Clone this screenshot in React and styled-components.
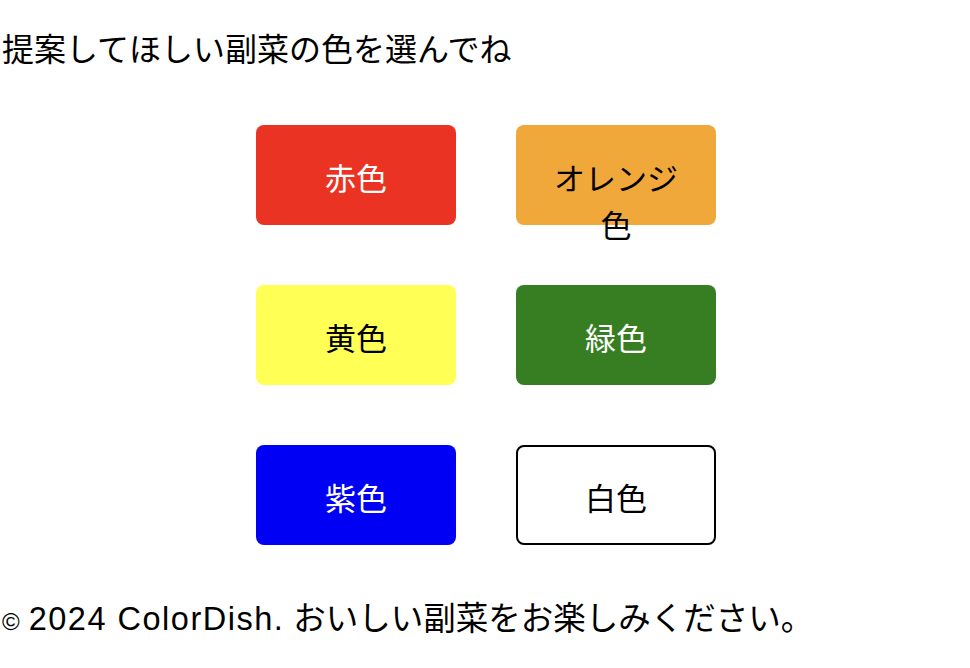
import React from "react";
import styled, { createGlobalStyle } from "styled-components";

const GlobalStyle = createGlobalStyle`
  body {
    margin: 0;
    background: #ffffff;
    font-family: "Liberation Sans", "Noto Sans CJK JP", sans-serif;
    color: #000000;
  }
`;

const colors = [
  { name: "赤色", bg: "#ea3323", fg: "#ffffff" },
  { name: "オレンジ色", bg: "#f0a83b", fg: "#000000" },
  { name: "黄色", bg: "#ffff55", fg: "#000000" },
  { name: "緑色", bg: "#377e22", fg: "#ffffff" },
  { name: "紫色", bg: "#0000f5", fg: "#ffffff" },
  { name: "白色", bg: "#ffffff", fg: "#000000", border: true },
];

const App = () => {
  return (
    <Page>
      <GlobalStyle />
      <Title>提案してほしい副菜の色を選んでね</Title>
      <Grid>
        {colors.map((c) => (
          <ColorButton key={c.name} $bg={c.bg} $fg={c.fg} $border={c.border}>
            {c.name}
          </ColorButton>
        ))}
      </Grid>
      <Footer>
        <Copy>©</Copy> <Latin>2024 ColorDish.</Latin> おいしい副菜をお楽しみください。
      </Footer>
    </Page>
  );
};

export default App;

const Page = styled.div`
  display: flex;
  flex-direction: column;
  padding: 24px 0 0 2px;
`;

const Title = styled.h1`
  margin: 0;
  font-family: "Noto Sans CJK JP", sans-serif;
  font-size: 32px;
  font-weight: 400;
  line-height: 46px;
`;

const Grid = styled.div`
  display: grid;
  grid-template-columns: repeat(2, 200px);
  grid-auto-rows: 100px;
  column-gap: 60px;
  row-gap: 60px;
  justify-content: center;
  margin-top: 55px;
`;

const ColorButton = styled.div`
  box-sizing: border-box;
  height: 100px;
  padding: 0 24px;
  padding-top: ${(p) => (p.$border ? "26px" : "28px")};
  border-radius: 8px;
  background: ${(p) => p.$bg};
  color: ${(p) => p.$fg};
  border: ${(p) => (p.$border ? "2px solid #000000" : "none")};
  font-family: "Noto Sans CJK JP", sans-serif;
  font-size: 31px;
  line-height: 47px;
  text-align: center;
  cursor: pointer;
`;

const Footer = styled.footer`
  margin-top: 52px;
  font-size: 32.5px;
  line-height: 44px;
  white-space: nowrap;
`;

const Copy = styled.span`
  font-size: 24px;
`;

const Latin = styled.span`
  letter-spacing: 1.5px;
`;
